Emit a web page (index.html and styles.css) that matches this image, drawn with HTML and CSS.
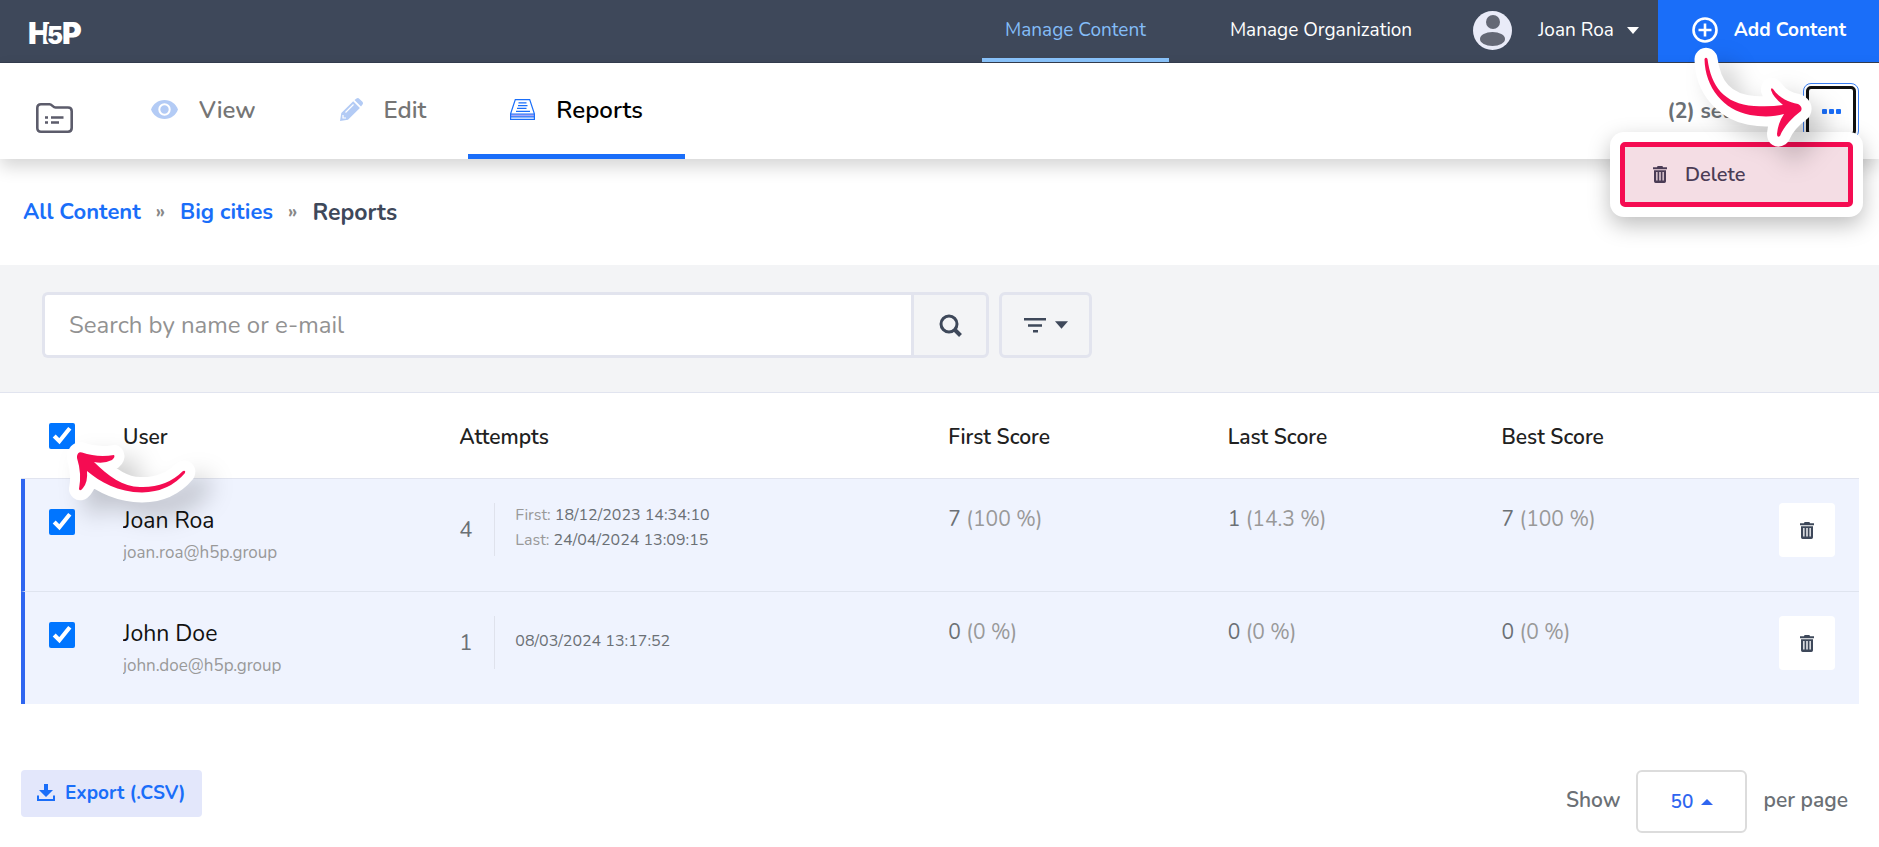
FILE: index.html
```
<!DOCTYPE html>
<html lang="en">
<head>
<meta charset="UTF-8" />
<title>H5P - Reports</title>
<meta name="viewport" content="width=device-width, initial-scale=1" />
<link rel="stylesheet" href="styles.css">
</head>
<body>

<!-- shared icons -->
<svg class="sprite" aria-hidden="true">
  <symbol id="trash" viewBox="0 0 14 17">
    <path fill="currentColor" fill-rule="evenodd" d="M4 1.2Q4 0 5.200 0h3.600Q10 0 10 1.200h4v2H0v-2zM1 4.200h12v11Q13 17 11.400 17H2.600Q1 17 1 15.200zM3.200 6v8.600h1.300V6zM6.300 6v8.600h1.400V6zM9.500 6v8.600h1.300V6z"/>
  </symbol>
  <symbol id="caret" viewBox="0 0 12 7">
    <path fill="currentColor" d="M0 0h12L6 7z"/>
  </symbol>
</svg>

<header class="topbar">
  <a href="#" class="logo" aria-label="H5P">
    <svg width="58" height="42" viewBox="0 0 58 42">
      <text class="logo-text" y="33"><tspan x="0">H</tspan><tspan class="logo-five" x="19">5</tspan><tspan x="34">P</tspan></text>
    </svg>
  </a>
  <nav class="main-nav">
    <a href="#" class="active">Manage Content</a>
    <a href="#">Manage Organization</a>
  </nav>
  <button type="button" class="account">
    <svg width="39" height="39" viewBox="0 0 39 39">
      <circle cx="19.500" cy="19.500" r="19.500" fill="#e9ebf8"/>
      <circle cx="20" cy="11" r="7" fill="#646875"/>
      <ellipse cx="19.500" cy="28" rx="12.500" ry="7" fill="#646875"/>
    </svg>
    <span>Joan Roa</span>
    <svg width="12" height="7"><use href="#caret"/></svg>
  </button>
  <button type="button" class="add-content">
    <svg width="26" height="26" viewBox="0 0 26 26" fill="none" stroke="#fff">
      <circle cx="13" cy="13" r="11.500" stroke-width="2.600"/>
      <path d="M13 6.500v13M6.500 13h13" stroke-width="2.600"/>
    </svg>
    <span>Add Content</span>
  </button>
</header>

<div class="toolbar">
  <a href="#" class="folder" aria-label="Content folder">
    <svg width="37" height="30" viewBox="0 0 37 30" fill="none" stroke="#5c5c6b">
      <path stroke-width="2.600" stroke-linejoin="round" d="M5 1.300h8.500c2.500 0 3.500 3.200 6 3.200H32q3.700 0 3.700 3.700V25q0 3.700-3.700 3.700H5Q1.300 28.700 1.300 25V5Q1.300 1.300 5 1.300z"/>
      <path stroke-width="2.600" d="M9 14.500h3M15 14.500h12.500M9 19.500h3M15 19.500h8"/>
    </svg>
  </a>
  <nav class="tabs">
    <a href="#">
      <svg width="27" height="19" viewBox="0 0 27 19" fill="#b3cbf5">
        <path d="M13.500 0C20 0 25 4 27 9.500 25 15 20 19 13.500 19S2 15 0 9.500C2 4 7 0 13.500 0z"/>
        <circle cx="13.500" cy="9.500" r="5.200" fill="none" stroke="#fff" stroke-width="2"/>
      </svg>
      View
    </a>
    <a href="#">
      <svg width="23" height="23" viewBox="0 0 23 23" fill="#b3cbf5">
        <path d="M0 23l1.300-8L13.200 3.200l6.700 6.700L8 21.700zM14.500 2l2-1.500q1.500-1 3 .4l2.700 2.700q1.400 1.500.3 3L21 8.500z"/>
        <path d="M5.500 14.500L13.500 6.500M3 17v3h3" fill="none" stroke="#fff" stroke-width="1.200"/>
      </svg>
      Edit
    </a>
    <a href="#" class="active">
      <svg width="25" height="21" viewBox="0 0 25 21" fill="none" stroke="#1a6ef9">
        <path d="M1 15h23v2.500H1z" fill="#a9a6f5" stroke="none"/>
        <path d="M.6 14.800L5.300.6h14.400l4.700 14.200v5.600H.6zM.6 15h23.800M.6 17.800h23.800" stroke-width="1.200"/>
        <path d="M8.500 3.800h8M8 6.600h9.500M7 9.400h9.500M6 12.300h14" stroke-width="1.300"/>
      </svg>
      Reports
    </a>
  </nav>
  <div class="selection">
    <span>(2) selected</span>
    <button type="button" class="more" aria-label="More actions">
      <svg width="19" height="5" viewBox="0 0 19 5" fill="#1a6ef9">
        <rect width="5" height="5" rx="1"/>
        <rect x="7" width="5" height="5" rx="1"/>
        <rect x="14" width="5" height="5" rx="1"/>
      </svg>
    </button>
    <div class="menu">
      <button type="button">
        <svg width="14" height="17"><use href="#trash"/></svg>
        Delete
      </button>
    </div>
    <svg class="arrow arrow-menu" width="180" height="150" viewBox="0 0 180 150" aria-hidden="true">
      <path d="M14.500 15Q16 12.500 17.500 15C21 42 34 60 64 62Q80 63 93 61Q83 53 81 46Q81 43 83 45C90 55 99 58 108 60Q113 63 111 67C103 73 94 82 90 92Q87 94 87 90Q88 79 94 70C84 73 72 73 60 71C34 66 15 44 14.500 15z"/>
    </svg>
  </div>
</div>

<nav class="breadcrumb">
  <a href="#">All Content</a>
  <span class="sep">»</span>
  <a href="#">Big cities</a>
  <span class="sep">»</span>
  <span class="current">Reports</span>
</nav>

<form class="filters">
  <div class="search">
    <input type="text" placeholder="Search by name or e-mail" aria-label="Search by name or e-mail" />
    <button type="submit" aria-label="Search">
      <svg width="23" height="23" viewBox="0 0 23 23" fill="none" stroke="#3e485a">
        <circle cx="10" cy="10" r="8" stroke-width="3"/>
        <path d="M15.500 15.500l6 6" stroke-width="4"/>
      </svg>
    </button>
  </div>
  <button type="button" class="filter" aria-label="Filter">
    <svg width="22" height="15" viewBox="0 0 22 15" fill="#3e485a">
      <path d="M0 0h22v2.600H0zM4 6.200h14v2.600H4zM9 12h5v2.600H9z"/>
    </svg>
    <svg width="13" height="8"><use href="#caret"/></svg>
  </button>
</form>

<main>
  <table class="results">
    <colgroup>
      <col class="col-check"><col class="col-user"><col class="col-attempts">
      <col class="col-first"><col class="col-last"><col class="col-best"><col>
    </colgroup>
    <thead>
      <tr>
        <th class="check">
          <input type="checkbox" aria-label="Select all" checked />
          <svg class="arrow arrow-check" width="180" height="110" viewBox="0 0 180 110" aria-hidden="true">
            <path d="M17 16Q18 11 22 12.500C32 16 43 17 54 15Q55.500 17 52 20Q44 24 34 22C48 36 63 47 80 47Q106 48 123 31Q126 30 125 33Q109 52 82 52.500C58 52 40 42 27 31Q28 42 23 48Q20 52 19 49Q22 34 17 18z"/>
          </svg>
        </th>
        <th>User</th>
        <th>Attempts</th>
        <th>First Score</th>
        <th>Last Score</th>
        <th>Best Score</th>
        <th></th>
      </tr>
    </thead>
    <tbody>
      <tr>
        <td class="check"><input type="checkbox" aria-label="Select Joan Roa" checked /></td>
        <td>
          <div class="name">Joan Roa</div>
          <div class="email">joan.roa@h5p.group</div>
        </td>
        <td>
          <div class="attempts">
            <span class="count">4</span>
            <div class="dates">
              <div><span>First:</span> 18/12/2023 14:34:10</div>
              <div><span>Last:</span> 24/04/2024 13:09:15</div>
            </div>
          </div>
        </td>
        <td class="score">7 <span>(100 %)</span></td>
        <td class="score">1 <span>(14.3 %)</span></td>
        <td class="score">7 <span>(100 %)</span></td>
        <td><button type="button" class="remove" aria-label="Delete Joan Roa"><svg width="14" height="17"><use href="#trash"/></svg></button></td>
      </tr>
      <tr>
        <td class="check"><input type="checkbox" aria-label="Select John Doe" checked /></td>
        <td>
          <div class="name">John Doe</div>
          <div class="email">john.doe@h5p.group</div>
        </td>
        <td>
          <div class="attempts">
            <span class="count">1</span>
            <div class="dates">
              <div>08/03/2024 13:17:52</div>
            </div>
          </div>
        </td>
        <td class="score">0 <span>(0 %)</span></td>
        <td class="score">0 <span>(0 %)</span></td>
        <td class="score">0 <span>(0 %)</span></td>
        <td><button type="button" class="remove" aria-label="Delete John Doe"><svg width="14" height="17"><use href="#trash"/></svg></button></td>
      </tr>
    </tbody>
  </table>

  <div class="table-footer">
    <button type="button" class="export">
      <svg width="18" height="17" viewBox="0 0 18 17" fill="#1a6ef9">
        <path d="M7 0h4v6h5l-7 7-7-7h5zM0 11.500h2V15h14v-3.500h2V17H0z"/>
      </svg>
      Export (.CSV)
    </button>
    <div class="page-size">
      <label for="pageSize">Show</label>
      <div class="select">
        <select id="pageSize">
          <option>50</option>
          <option>100</option>
        </select>
        <svg width="12" height="6" viewBox="0 0 12 6"><path fill="#2f66f0" d="M0 6h12L6 0z"/></svg>
      </div>
      <span>per page</span>
    </div>
  </div>
</main>

</body>
</html>
```
FILE: styles.css
```
* {
  box-sizing: border-box;
}
body {
  margin: 0;
  background: #fff;
  color: #6b7075;
  font-family: Nunito, Lato, sans-serif;
  font-size: 19px;
}
a {
  color: inherit;
  text-decoration: none;
}
button, input, select {
  font: inherit;
  color: inherit;
}
button {
  border: none;
  background: none;
  padding: 0;
  cursor: pointer;
}
svg {
  display: block;
  flex: none;
}
.sprite {
  display: none;
}

/* top bar */
.topbar {
  display: flex;
  height: 63px;
  background: #3e485a;
  border-bottom: 1px solid #343d4f;
  color: #fff;
}
.logo {
  margin: 11px auto 0 28px;
}
.logo-text {
  font-family: Inter, sans-serif;
  font-size: 30px;
  font-weight: 900;
  fill: #fff;
}
.logo-five {
  font-size: 24px;
  stroke: #3e485a;
  stroke-width: 4px;
  paint-order: stroke;
}
.main-nav {
  display: flex;
  gap: 38px;
}
.main-nav a {
  padding: 17px 23px 0;
  line-height: 26px;
  border-bottom: 4px solid transparent;
}
.main-nav a.active {
  color: #84bdf8;
  border-color: #8ac4fc;
}
.account {
  display: flex;
  align-items: center;
  gap: 13px;
  padding: 2px 19px 4px 38px;
}
.account span {
  margin-left: 13px;
}
.add-content {
  display: flex;
  align-items: center;
  gap: 16px;
  padding: 0 33px 2px 34px;
  background: #1a6ef9;
  font-weight: 700;
}

/* toolbar */
.toolbar {
  position: relative;
  display: flex;
  height: 96px;
  background: #fff;
  box-shadow: 0 8px 16px rgba(0, 0, 0, 0.16);
}
.folder {
  margin: 40px 36px 0 36px;
}
.tabs {
  display: flex;
}
.tabs a {
  display: flex;
  align-items: center;
  gap: 21px;
  padding: 2px 42px 0;
  border-bottom: 5px solid transparent;
  color: #757575;
  font-size: 24px;
  font-weight: 600;
}
.tabs a.active {
  color: #000;
  border-color: #1a6ef9;
}
.selection {
  position: relative;
  display: flex;
  align-items: center;
  gap: 21px;
  margin-left: auto;
  padding: 0 20px 0 0;
  font-size: 21px;
  font-weight: 700;
}
.more {
  display: flex;
  align-items: center;
  justify-content: center;
  width: 50px;
  height: 50px;
  margin: 0 3px;
  border: 3px solid #111;
  border-radius: 5px;
  outline: 1px solid #3b7ff5;
  outline-offset: 2px;
}
.menu {
  position: absolute;
  top: 69px;
  right: 16px;
  width: 253px;
  padding: 10px;
  background: #fff;
  border-radius: 14px;
  box-shadow: 0 8px 22px rgba(0, 0, 0, 0.26);
}
.menu button {
  display: flex;
  align-items: center;
  gap: 18px;
  width: 100%;
  height: 65px;
  padding: 0 28px;
  background: #f4dde4;
  border: 5px solid #f50c52;
  border-radius: 5px;
  color: #4b3c55;
  font-size: 20px;
  font-weight: 600;
}
.arrow {
  position: absolute;
  pointer-events: none;
  overflow: visible;
  fill: #f50c52;
  stroke: #fff;
  stroke-width: 20px;
  stroke-linejoin: round;
  paint-order: stroke;
  filter: drop-shadow(15px 14px 12px rgba(0, 0, 0, 0.2));
}
.arrow-menu {
  top: -19px;
  right: 9px;
}

/* breadcrumb */
.breadcrumb {
  display: flex;
  align-items: center;
  gap: 15px;
  height: 106px;
  padding: 0 23px;
  font-weight: 700;
  font-size: 22px;
}
.breadcrumb a {
  color: #1a6ef9;
}
.breadcrumb .sep {
  color: #888;
  font-size: 19px;
}
.breadcrumb .current {
  color: #3e485a;
  font-size: 23px;
}

/* search */
.filters {
  display: flex;
  gap: 10px;
  padding: 27px 42px 34px;
  background: #f3f4f6;
  border-bottom: 1px solid #e1e4ef;
}
.search {
  display: flex;
  flex: 0 1 947px;
  min-width: 0;
  height: 66px;
}
.search input {
  flex: 1;
  min-width: 0;
  padding: 0 24px;
  border: 3px solid #e2e4ee;
  border-right: none;
  border-radius: 6px 0 0 6px;
  background: #fff;
  font-size: 24px;
}
.search input::placeholder {
  color: #929292;
}
.search button, .filter {
  display: flex;
  align-items: center;
  justify-content: center;
  border: 3px solid #e2e4ee;
  color: #3e485a;
}
.search button {
  width: 78px;
  border-radius: 0 6px 6px 0;
}
.filter {
  gap: 9px;
  width: 93px;
  border-radius: 6px;
}

/* results */
main {
  padding: 0 20px 0 21px;
}
.results {
  width: 100%;
  table-layout: fixed;
  border-collapse: separate;
  border-spacing: 0;
}
.col-check {
  width: 102px;
}
.col-user {
  width: 18.3%;
}
.col-attempts {
  width: 26.6%;
}
.col-first {
  width: 15.2%;
}
.col-last {
  width: 14.9%;
}
.col-best {
  width: 15%;
}
.results th {
  height: 86px;
  padding: 2px 0 0;
  border-bottom: 1px solid #e1e4ef;
  color: #212121;
  font-size: 21px;
  font-weight: 600;
  text-align: left;
}
.results td {
  height: 113px;
  padding: 24px 0 0;
  background: #eff3fe;
  border-bottom: 1px solid #dfe4ef;
  vertical-align: top;
}
.results tr:last-child td {
  border-bottom: none;
  height: 112px;
}
.results .check {
  position: relative;
  padding-top: 0;
  padding-left: 28px;
}
.results td.check {
  padding-top: 30px;
  padding-left: 24px;
  border-left: 4px solid #2f66f0;
}
.check input {
  display: block;
  width: 26px;
  height: 26px;
  margin: 0;
  accent-color: #0075ff;
}
.arrow-check {
  top: 47px;
  left: 39px;
  z-index: 1;
}
.name {
  color: #111;
  font-size: 23px;
  line-height: 36px;
}
.email {
  color: #999;
  font-size: 17px;
  line-height: 28px;
}
.attempts {
  display: flex;
  align-items: center;
  height: 53px;
}
.count {
  width: 35px;
  font-size: 22px;
}
.dates {
  display: flex;
  flex-direction: column;
  justify-content: center;
  height: 100%;
  padding: 0 0 3px 20px;
  border-left: 1px solid #dfe2ec;
  font-size: 16px;
  line-height: 25px;
}
.dates span {
  color: #999;
}
.score {
  font-size: 21px;
  line-height: 33px;
}
.score span {
  color: #999;
}
.remove {
  display: flex;
  align-items: center;
  justify-content: center;
  width: 56px;
  height: 54px;
  margin-left: auto;
  margin-right: 24px;
  border-radius: 4px;
  background: #fff;
  color: #3e485a;
}

/* footer */
.table-footer {
  display: flex;
  align-items: flex-start;
  justify-content: space-between;
  padding: 66px 11px 14px 0;
  font-weight: 700;
}
.export {
  display: flex;
  align-items: center;
  gap: 10px;
  height: 47px;
  padding: 0 16px 2px;
  border-radius: 4px;
  background: #e3e7fb;
  color: #1a6ef9;
  font-weight: 700;
}
.page-size {
  display: flex;
  align-items: center;
  gap: 16px;
  font-size: 21px;
  font-weight: 600;
}
.page-size label, .page-size span {
  padding-bottom: 4px;
}
.select {
  position: relative;
}
.select select {
  width: 111px;
  height: 63px;
  padding: 0 32px;
  border: 2px solid #dcdcdc;
  border-radius: 6px;
  background: #fff;
  color: #2f66f0;
  font-size: 19px;
  appearance: none;
}
.select svg {
  position: absolute;
  top: 29px;
  right: 34px;
  pointer-events: none;
}
```
